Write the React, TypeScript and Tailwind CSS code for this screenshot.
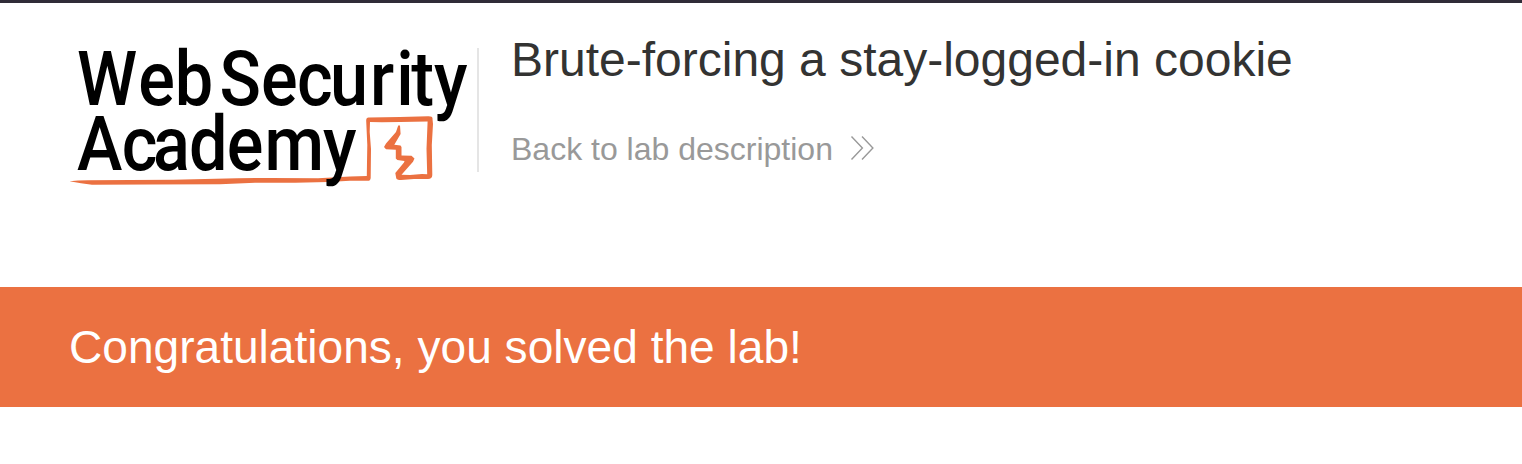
import React from "react";

const STRETCH = 0.9;

const webX = [77, 138.3, 174.8];
const securityX = [219.6, 261, 297, 330, 370, 396.3, 411.3, 433.9];
const academyX = [76.9, 121.8, 153, 189, 226.7, 264.6, 323];

function Word({ text, xs, y }: { text: string; xs: number[]; y: number }) {
  return (
    <text x={xs.map((x) => (x / STRETCH).toFixed(2)).join(" ")} y={y} transform={`scale(${STRETCH} 1)`}>
      {text}
    </text>
  );
}

function Logo() {
  return (
    <svg className="block h-[160px] w-[410px] shrink-0 overflow-visible" viewBox="60 40 410 160" role="img" aria-label="Web Security Academy">
      <path
        fill="#eb7141"
        d="M69.5 181.3 L78 180.4 L88 180.2 L173 179.7 L237 178.2 L270 178 L318 178.3 L350 176.4 L366.8 176 L367 162 L367.3 145 L366.2 121 Q366 117.2 369 117.5 L400 117 L428 116.2 Q433 116 432.5 119 L433 124 L431.8 145 L432.3 175 Q432.2 178.8 428 179 L414 179 L401 180 Q396.5 180 396.2 178 L395.3 173 L404 162.5 L404.5 161 L397.3 160 L395.8 158.5 L395.8 149.8 L386 149.2 L384 147 L386 143.5 L396 132 L398.2 125.5 L400 125.5 L400.6 134 L394.3 144.8 L400.5 145.5 L401.5 147 L401.5 155.5 L411.5 155.8 L414.5 158.5 L413 161.7 L401.5 174.8 L410 175 L422 174 L427.2 174.3 L426.5 149 L427.6 121.5 L400 121.9 L382 122.3 L370 122 L369.7 132 L371 149 L370.7 178 Q370.3 181.3 367 180.8 L350 180.8 L328 182 L295 182.7 L255 182.7 L220 184.2 L150 184.4 L92 184.7 L81 183.3 Z"
      />
      <g className="font-['Roboto',sans-serif] font-medium" fill="#000" fontSize="76">
        <Word text="Web" xs={webX} y={105.2} />
        <Word text="Security" xs={securityX} y={105.2} />
        <Word text="Academy" xs={academyX} y={170.2} />
      </g>
    </svg>
  );
}

function DoubleChevron() {
  return (
    <svg className="mb-[2px] ml-[17px] h-[26px] w-[24px] shrink-0" viewBox="0 0 24 26" fill="none" stroke="#999" strokeWidth="1.4">
      <path d="M1.5 1.5 L12.4 13 L1.5 24.5 M12 1.5 L22.9 13 L12 24.5" />
    </svg>
  );
}

export default function App() {
  return (
    <div className="flex h-[464px] w-full flex-col overflow-hidden bg-white font-['Liberation_Sans',Arial,sans-serif]">
      <header className="flex h-[287px] shrink-0 border-t-[3px] border-[#302c38] pl-[60px] pt-[37px]">
        <Logo />
        <div className="ml-[7px] mt-2 h-[124px] w-[2px] shrink-0 bg-[#e5e5e5]" />
        <div className="ml-8 flex flex-col">
          <h2 className="-mt-2 whitespace-nowrap text-[48px] leading-[56px] text-[#333332]">Brute-forcing a stay-logged-in cookie</h2>
          <a className="mt-[43px] flex h-9 items-center whitespace-nowrap text-[32px] leading-[36px] text-[#999]">
            Back to lab description
            <DoubleChevron />
          </a>
        </div>
      </header>
      <section className="flex h-[120px] shrink-0 items-center bg-[#eb7141] pl-[69px]">
        <p className="text-[46.1px] leading-[56px] text-white">Congratulations, you solved the lab!</p>
      </section>
    </div>
  );
}
